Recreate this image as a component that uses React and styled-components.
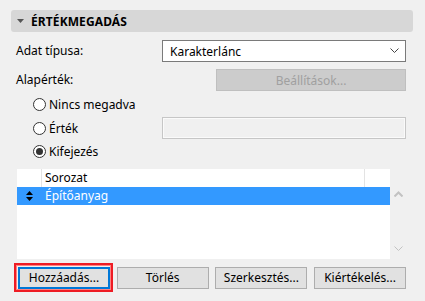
import styled, { createGlobalStyle } from "styled-components";

const GlobalStyle = createGlobalStyle`
  html, body {
    margin: 0;
    padding: 0;
    background: #f0f0f0;
  }
  body {
    font-family: "Noto Sans", "Open Sans", "Liberation Sans", sans-serif;
    font-size: 12px;
    color: #000;
  }
`;

const Page = styled.div`
  width: 425px;
  height: 301px;
  background: #f0f0f0;
  padding-top: 10px;
  box-sizing: border-box;
`;

const SectionHeader = styled.div`
  display: flex;
  align-items: center;
  gap: 7px;
  height: 22px;
  margin: 0 12px 0 11px;
  padding-left: 6px;
  background: #d7d7d7;
  border-radius: 3px;
  font-weight: 700;
  font-size: 12px;
  letter-spacing: 0.1px;
`;

const Body = styled.div`
  padding: 8px 19px 0 16px;
  display: flex;
  flex-direction: column;
`;

const FieldRow = styled.div`
  display: grid;
  grid-template-columns: ${(p) => p.$label || "146px"} 1fr;
  align-items: center;
  height: 22px;
  margin-bottom: ${(p) => p.$gap || 7}px;
`;

const Label = styled.span`
  line-height: 22px;
`;

const Select = styled.div`
  display: flex;
  align-items: center;
  justify-content: space-between;
  height: 22px;
  box-sizing: border-box;
  border: 1px solid #7a7a7a;
  background: #fff;
  padding: 0 6px 0 7px;
`;

const DisabledButton = styled.div`
  display: flex;
  align-items: center;
  justify-content: center;
  height: 22px;
  box-sizing: border-box;
  border: 1px solid #bfbfbf;
  background: #cccccc;
  color: #a0a0a0;
`;

const RadioList = styled.div`
  display: flex;
  flex-direction: column;
  padding-left: 17px;
  margin-top: 1px;
`;

const RadioRow = styled.div`
  display: grid;
  grid-template-columns: 129px 1fr;
  align-items: center;
  height: 23.5px;
`;

const RadioLabel = styled.label`
  display: flex;
  align-items: center;
  gap: 3px;
`;

const RadioCircle = styled.span`
  width: 13px;
  height: 13px;
  box-sizing: border-box;
  border-radius: 50%;
  border: 1px solid #333;
  background: #fff;
  display: flex;
  align-items: center;
  justify-content: center;
  &::after {
    content: "";
    width: 7px;
    height: 7px;
    border-radius: 50%;
    background: ${(p) => (p.$checked ? "#333" : "transparent")};
  }
`;

const TextField = styled.div`
  height: 22px;
  box-sizing: border-box;
  border: 1px solid #c6c6c6;
  box-shadow: inset 0 0 0 1px #fafafa;
  background: #f0f0f0;
`;

const ListWrap = styled.div`
  display: flex;
  margin-top: 5px;
  margin-left: 1px;
  height: 90px;
`;

const List = styled.div`
  width: 373px;
  background: #fff;
  display: flex;
  flex-direction: column;
`;

const ListRow = styled.div`
  display: grid;
  grid-template-columns: 25px 1fr 25px;
  height: 18px;
  align-items: center;
  background: ${(p) => (p.$selected ? "#3399ff" : "#fff")};
  color: ${(p) => (p.$selected ? "#fff" : "#000")};
`;

const Cell = styled.div`
  height: 100%;
  display: flex;
  align-items: center;
  padding-left: ${(p) => p.$pad || 0}px;
  justify-content: ${(p) => (p.$center ? "center" : "flex-start")};
  border-right: ${(p) => (p.$divider ? "1px solid #e3e3e3" : "none")};
`;

const ScrollBar = styled.div`
  width: 16px;
  display: flex;
  flex-direction: column;
  justify-content: space-between;
  align-items: center;
  padding: 22px 0 7px;
  box-sizing: border-box;
`;

const ButtonBar = styled.div`
  display: grid;
  grid-template-columns: repeat(4, 92px);
  column-gap: 6.7px;
  margin-top: 8px;
  margin-left: 2px;
`;

const FocusRing = styled.div`
  position: relative;
  &::before {
    content: "";
    position: absolute;
    left: -4px;
    right: -3px;
    top: -4px;
    bottom: -3px;
    border: 2px solid #ee1c24;
    box-shadow: inset 0 0 0 1px #ff8080;
  }
`;

const Button = styled.div`
  display: flex;
  align-items: center;
  justify-content: center;
  height: 22px;
  box-sizing: border-box;
  background: #e1e1e1;
  border: ${(p) => (p.$default ? "2px solid #0078d7" : "1px solid #adadad")};
`;

function Chevron({ color = "#444", up = false }) {
  return (
    <svg width="9" height="6" viewBox="0 0 9 6">
      <path
        d={up ? "M0.5 5.5 L4.5 1.5 L8.5 5.5" : "M0.5 0.5 L4.5 4.5 L8.5 0.5"}
        fill="none"
        stroke={color}
        strokeWidth={up ? 2 : 1}
      />
    </svg>
  );
}

function SortIcon() {
  return (
    <svg width="7" height="10" viewBox="0 0 7 10">
      <path d="M3.5 0 L7 4 L0 4 Z M0 6 L7 6 L3.5 10 Z" fill="#000" />
    </svg>
  );
}

export default function App() {
  return (
    <Page>
      <GlobalStyle />
      <SectionHeader>
        <svg width="7" height="4" viewBox="0 0 7 4">
          <path d="M0 0 L7 0 L3.5 4 Z" fill="#555" />
        </svg>
        ÉRTÉKMEGADÁS
      </SectionHeader>
      <Body>
        <FieldRow>
          <Label>Adat típusa:</Label>
          <Select>
            Karakterlánc
            <Chevron />
          </Select>
        </FieldRow>
        <FieldRow $label="200px" $gap={1}>
          <Label>Alapérték:</Label>
          <DisabledButton>Beállítások...</DisabledButton>
        </FieldRow>
        <RadioList>
          <RadioRow>
            <RadioLabel>
              <RadioCircle />
              Nincs megadva
            </RadioLabel>
          </RadioRow>
          <RadioRow>
            <RadioLabel>
              <RadioCircle />
              Érték
            </RadioLabel>
            <TextField />
          </RadioRow>
          <RadioRow>
            <RadioLabel>
              <RadioCircle $checked />
              Kifejezés
            </RadioLabel>
          </RadioRow>
        </RadioList>
        <ListWrap>
          <List>
            <ListRow>
              <Cell $divider />
              <Cell $pad={3} $divider>
                Sorozat
              </Cell>
              <Cell />
            </ListRow>
            <ListRow $selected>
              <Cell $center>
                <SortIcon />
              </Cell>
              <Cell $pad={3}>Építőanyag</Cell>
              <Cell />
            </ListRow>
          </List>
          <ScrollBar>
            <Chevron up color="#c2c2c2" />
            <Chevron color="#c2c2c2" />
          </ScrollBar>
        </ListWrap>
        <ButtonBar>
          <FocusRing>
            <Button $default>Hozzáadás...</Button>
          </FocusRing>
          <Button>Törlés</Button>
          <Button>Szerkesztés...</Button>
          <Button>Kiértékelés...</Button>
        </ButtonBar>
      </Body>
    </Page>
  );
}
